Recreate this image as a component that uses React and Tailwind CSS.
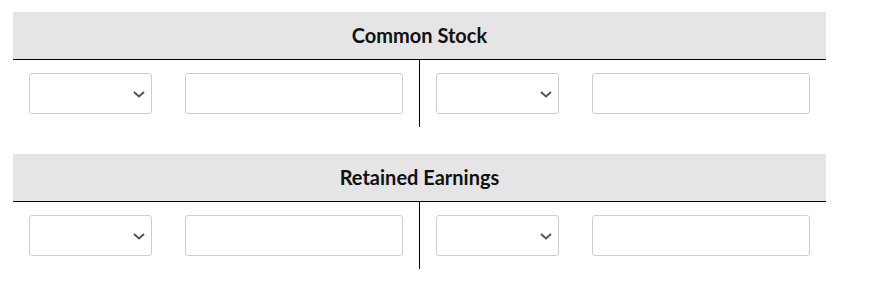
const sections = ["Common Stock", "Retained Earnings"];

function SelectBox() {
  return (
    <div className="w-[123px] h-[41px] border border-[#cfcfcf] rounded-[3px] bg-white flex items-center justify-end pr-[6px]">
      <svg width="12" height="7" viewBox="0 0 12 7" className="mt-[2px]">
        <polyline points="1,1 6,5.5 11,1" fill="none" stroke="#555" strokeWidth="2" />
      </svg>
    </div>
  );
}

function InputBox() {
  return <div className="w-[218px] h-[41px] border border-[#cfcfcf] rounded-[3px] bg-white" />;
}

function Half({ last }) {
  return (
    <div className={`flex-1 flex items-start gap-[33px] pl-4 py-[13px] ${last ? "" : "border-r border-black"}`}>
      <SelectBox />
      <InputBox />
    </div>
  );
}

function TAccount({ title }) {
  return (
    <div className="w-[813px]">
      <div className="h-[48px] bg-[#e5e5e5] border-b border-black flex items-center justify-center pb-[1px]">
        <h3 className="text-[20px] font-bold text-[#111]">{title}</h3>
      </div>
      <div className="flex">
        <Half />
        <Half last />
      </div>
    </div>
  );
}

export default function App() {
  return (
    <div className="bg-white min-h-[281px] pt-3 pl-[13px] flex flex-col gap-[27px]" style={{ fontFamily: "Lato, 'Liberation Sans', sans-serif" }}>
      {sections.map((s) => (
        <TAccount key={s} title={s} />
      ))}
    </div>
  );
}
